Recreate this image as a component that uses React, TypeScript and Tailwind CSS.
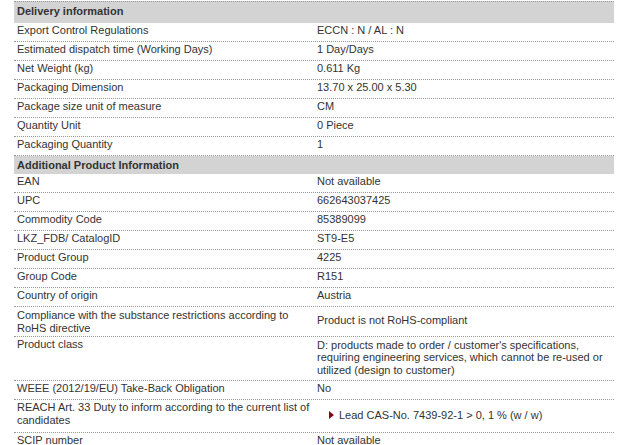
type Row = {
  label: string;
  value: React.ReactNode;
  h?: string;
  keyPad?: string;
  valPad?: string;
};

const delivery: Row[] = [
  { label: 'Export Control Regulations', value: 'ECCN : N / AL : N' },
  { label: 'Estimated dispatch time (Working Days)', value: '1 Day/Days' },
  { label: 'Net Weight (kg)', value: '0.611 Kg' },
  { label: 'Packaging Dimension', value: '13.70 x 25.00 x 5.30' },
  { label: 'Package size unit of measure', value: 'CM' },
  { label: 'Quantity Unit', value: '0 Piece' },
  { label: 'Packaging Quantity', value: '1' },
];

const LeadItem = () => (
  <div className="flex items-center pl-[12px]">
    <svg width="5" height="8" viewBox="0 0 5 8" className="mr-[5px] shrink-0">
      <path d="M0 0 L5 4 L0 8 Z" fill="#7d0c14" />
    </svg>
    <span>Lead CAS-No. 7439-92-1 &gt; 0, 1 % (w / w)</span>
  </div>
);

const additional: Row[] = [
  { label: 'EAN', value: 'Not available' },
  { label: 'UPC', value: '662643037425' },
  { label: 'Commodity Code', value: '85389099' },
  { label: 'LKZ_FDB/ CatalogID', value: 'ST9-E5' },
  { label: 'Product Group', value: '4225' },
  { label: 'Group Code', value: 'R151' },
  { label: 'Country of origin', value: 'Austria' },
  {
    label: 'Compliance with the substance restrictions according to RoHS directive',
    value: 'Product is not RoHS-compliant',
    h: 'h-[30px]',
    keyPad: 'pt-[2px]',
    valPad: 'pb-[2px]',
  },
  {
    label: 'Product class',
    value:
      "D: products made to order / customer's specifications, requiring engineering services, which cannot be re-used or utilized (design to customer)",
    h: 'h-[44px]',
    valPad: 'pb-[2px]',
  },
  { label: 'WEEE (2012/19/EU) Take-Back Obligation', value: 'No' },
  {
    label: 'REACH Art. 33 Duty to inform according to the current list of candidates',
    value: <LeadItem />,
    h: 'h-[33px]',
    valPad: 'pb-[2px]',
  },
  { label: 'SCIP number', value: 'Not available' },
];

const Header = ({ title, first }: { title: string; first?: boolean }) => (
  <div
    className={`h-[18px] bg-[#d3d3d3] px-[3px] pt-[3px] font-bold ${
      first ? 'box-content border-t border-dotted border-[#999]' : ''
    }`}
  >
    {title}
  </div>
);

const DataRow = ({ row }: { row: Row }) => (
  <div className={`flex ${row.h ?? 'h-[19px]'} border-b border-dotted border-[#999]`}>
    <div className={`w-[300px] shrink-0 self-start px-[3px] ${row.keyPad ?? 'pt-[1px]'}`}>
      {row.label}
    </div>
    <div className={`flex-1 self-center px-[3px] ${row.valPad ?? 'pb-[4px]'}`}>{row.value}</div>
  </div>
);

export default function App() {
  return (
    <div className="w-[630px] h-[445px] overflow-hidden bg-white pt-px">
      <div className="ml-[14px] w-[600px] text-[11px] leading-[12.65px] text-[#333] font-['Liberation_Sans',Arial,sans-serif]">
        <Header title="Delivery information" first />
        {delivery.map((r) => (
          <DataRow key={r.label} row={r} />
        ))}
        <Header title="Additional Product Information" />
        {additional.map((r) => (
          <DataRow key={r.label} row={r} />
        ))}
      </div>
    </div>
  );
}
